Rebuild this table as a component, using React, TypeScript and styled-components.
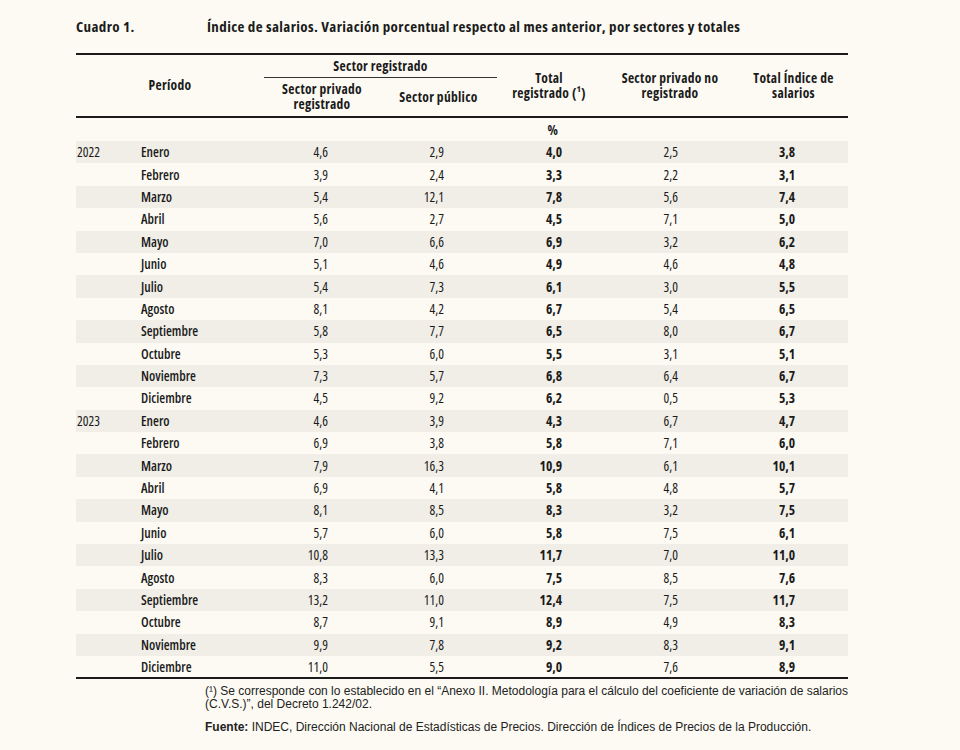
import React from "react";
import styled, { createGlobalStyle } from "styled-components";

const GlobalStyle = createGlobalStyle`
  html, body { margin: 0; padding: 0; background: #fcfaf3; }
  body { font-family: "Open Sans", "DejaVu Sans Condensed", sans-serif; font-stretch: 75%; color: #1b1b1b; }
`;

const Page = styled.div`
  width: 960px;
  height: 750px;
  box-sizing: border-box;
  padding: 16px 0 0 76px;
  background: #fcfaf3;
`;

const TitleRow = styled.div`
  display: flex;
  align-items: baseline;
  height: 22px;
  font-weight: 700;
  font-size: 15px;
  letter-spacing: 0.38px;
  margin-bottom: 15px;
`;

const TitleLabel = styled.span`
  width: 131px;
`;

const Table = styled.table`
  width: 772px;
  border-collapse: collapse;
  table-layout: fixed;
  border-top: 2px solid #1b1b1b;
  border-bottom: 2px solid #1b1b1b;
  font-size: 13.5px;
`;

const HeadCell = styled.th<{ $h?: number; $bottom?: boolean }>`
  font-weight: 700;
  font-size: 13.5px;
  letter-spacing: 0.3px;
  text-align: center;
  vertical-align: middle;
  line-height: 15px;
  padding: 0;
  height: ${(p) => (p.$h ? `${p.$h}px` : "auto")};
  border-bottom: ${(p) => (p.$bottom ? "2px solid #1b1b1b" : "none")};
  position: relative;
`;

const SubLine = styled.div`
  position: absolute;
  left: 0;
  right: 0;
  bottom: 0;
  height: 1px;
  background: #333;
`;

const UnitCell = styled.td`
  height: 23px;
  padding: 0;
  text-align: right;
  padding-right: 43px;
  font-weight: 700;
  vertical-align: middle;
`;

const Row = styled.tr<{ $shade: boolean }>`
  background: ${(p) => (p.$shade ? "#f0eee7" : "transparent")};
  height: 22.4px;
`;

const YearCell = styled.td`
  padding: 0 0 0 1px;
  font-weight: 400;
  vertical-align: middle;
`;

const MonthCell = styled.td`
  padding: 0;
  font-weight: 600;
  vertical-align: middle;
`;

const ValCell = styled.td<{ $pr: number; $bold?: boolean }>`
  padding: 0 ${(p) => p.$pr}px 0 0;
  text-align: right;
  font-weight: ${(p) => (p.$bold ? 700 : 400)};
  vertical-align: middle;
`;

const Notes = styled.div`
  margin: 6px 0 0 129px;
  width: 660px;
  font-family: "Liberation Sans", Arial, sans-serif;
  font-stretch: normal;
  font-size: 12px;
  line-height: 13px;
  color: #222;
`;

const Note = styled.p`
  margin: 0 0 10px 0;
`;

const Strong = styled.b`
  font-weight: 700;
`;

type R = [string, string, string, string, string, string, string];

const rows: R[] = [
  ["2022", "Enero", "4,6", "2,9", "4,0", "2,5", "3,8"],
  ["", "Febrero", "3,9", "2,4", "3,3", "2,2", "3,1"],
  ["", "Marzo", "5,4", "12,1", "7,8", "5,6", "7,4"],
  ["", "Abril", "5,6", "2,7", "4,5", "7,1", "5,0"],
  ["", "Mayo", "7,0", "6,6", "6,9", "3,2", "6,2"],
  ["", "Junio", "5,1", "4,6", "4,9", "4,6", "4,8"],
  ["", "Julio", "5,4", "7,3", "6,1", "3,0", "5,5"],
  ["", "Agosto", "8,1", "4,2", "6,7", "5,4", "6,5"],
  ["", "Septiembre", "5,8", "7,7", "6,5", "8,0", "6,7"],
  ["", "Octubre", "5,3", "6,0", "5,5", "3,1", "5,1"],
  ["", "Noviembre", "7,3", "5,7", "6,8", "6,4", "6,7"],
  ["", "Diciembre", "4,5", "9,2", "6,2", "0,5", "5,3"],
  ["2023", "Enero", "4,6", "3,9", "4,3", "6,7", "4,7"],
  ["", "Febrero", "6,9", "3,8", "5,8", "7,1", "6,0"],
  ["", "Marzo", "7,9", "16,3", "10,9", "6,1", "10,1"],
  ["", "Abril", "6,9", "4,1", "5,8", "4,8", "5,7"],
  ["", "Mayo", "8,1", "8,5", "8,3", "3,2", "7,5"],
  ["", "Junio", "5,7", "6,0", "5,8", "7,5", "6,1"],
  ["", "Julio", "10,8", "13,3", "11,7", "7,0", "11,0"],
  ["", "Agosto", "8,3", "6,0", "7,5", "8,5", "7,6"],
  ["", "Septiembre", "13,2", "11,0", "12,4", "7,5", "11,7"],
  ["", "Octubre", "8,7", "9,1", "8,9", "4,9", "8,3"],
  ["", "Noviembre", "9,9", "7,8", "9,2", "8,3", "9,1"],
  ["", "Diciembre", "11,0", "5,5", "9,0", "7,6", "8,9"],
];

export default function App() {
  return (
    <>
      <GlobalStyle />
      <Page>
        <TitleRow>
          <TitleLabel>Cuadro 1.</TitleLabel>
          <span>Índice de salarios. Variación porcentual respecto al mes anterior, por sectores y totales</span>
        </TitleRow>
        <Table>
          <colgroup>
            <col style={{ width: 65 }} />
            <col style={{ width: 123 }} />
            <col style={{ width: 116 }} />
            <col style={{ width: 117 }} />
            <col style={{ width: 104 }} />
            <col style={{ width: 138 }} />
            <col style={{ width: 109 }} />
          </colgroup>
          <thead>
            <tr>
              <HeadCell colSpan={2} rowSpan={2} $bottom>
                Período
              </HeadCell>
              <HeadCell colSpan={2} $h={23}>
                Sector registrado
                <SubLine />
              </HeadCell>
              <HeadCell rowSpan={2} $bottom>
                Total
                <br />
                registrado (¹)
              </HeadCell>
              <HeadCell rowSpan={2} $bottom>
                Sector privado no
                <br />
                registrado
              </HeadCell>
              <HeadCell rowSpan={2} $bottom>
                Total Índice de
                <br />
                salarios
              </HeadCell>
            </tr>
            <tr>
              <HeadCell $h={38} $bottom>
                Sector privado
                <br />
                registrado
              </HeadCell>
              <HeadCell $h={38} $bottom>
                Sector público
              </HeadCell>
            </tr>
          </thead>
          <tbody>
            <tr>
              <td colSpan={4} />
              <UnitCell>%</UnitCell>
              <td colSpan={2} />
            </tr>
            {rows.map((r, i) => (
              <Row key={i} $shade={i % 2 === 0}>
                <YearCell>{r[0]}</YearCell>
                <MonthCell>{r[1]}</MonthCell>
                <ValCell $pr={52}>{r[2]}</ValCell>
                <ValCell $pr={53}>{r[3]}</ValCell>
                <ValCell $pr={39} $bold>
                  {r[4]}
                </ValCell>
                <ValCell $pr={61}>{r[5]}</ValCell>
                <ValCell $pr={53} $bold>
                  {r[6]}
                </ValCell>
              </Row>
            ))}
          </tbody>
        </Table>
        <Notes>
          <Note>
            (¹) Se corresponde con lo establecido en el “Anexo II. Metodología para el cálculo del coeficiente de variación de salarios
            (C.V.S.)”, del Decreto 1.242/02.
          </Note>
          <Note>
            <Strong>Fuente:</Strong> INDEC, Dirección Nacional de Estadísticas de Precios. Dirección de Índices de Precios de la Producción.
          </Note>
        </Notes>
      </Page>
    </>
  );
}
